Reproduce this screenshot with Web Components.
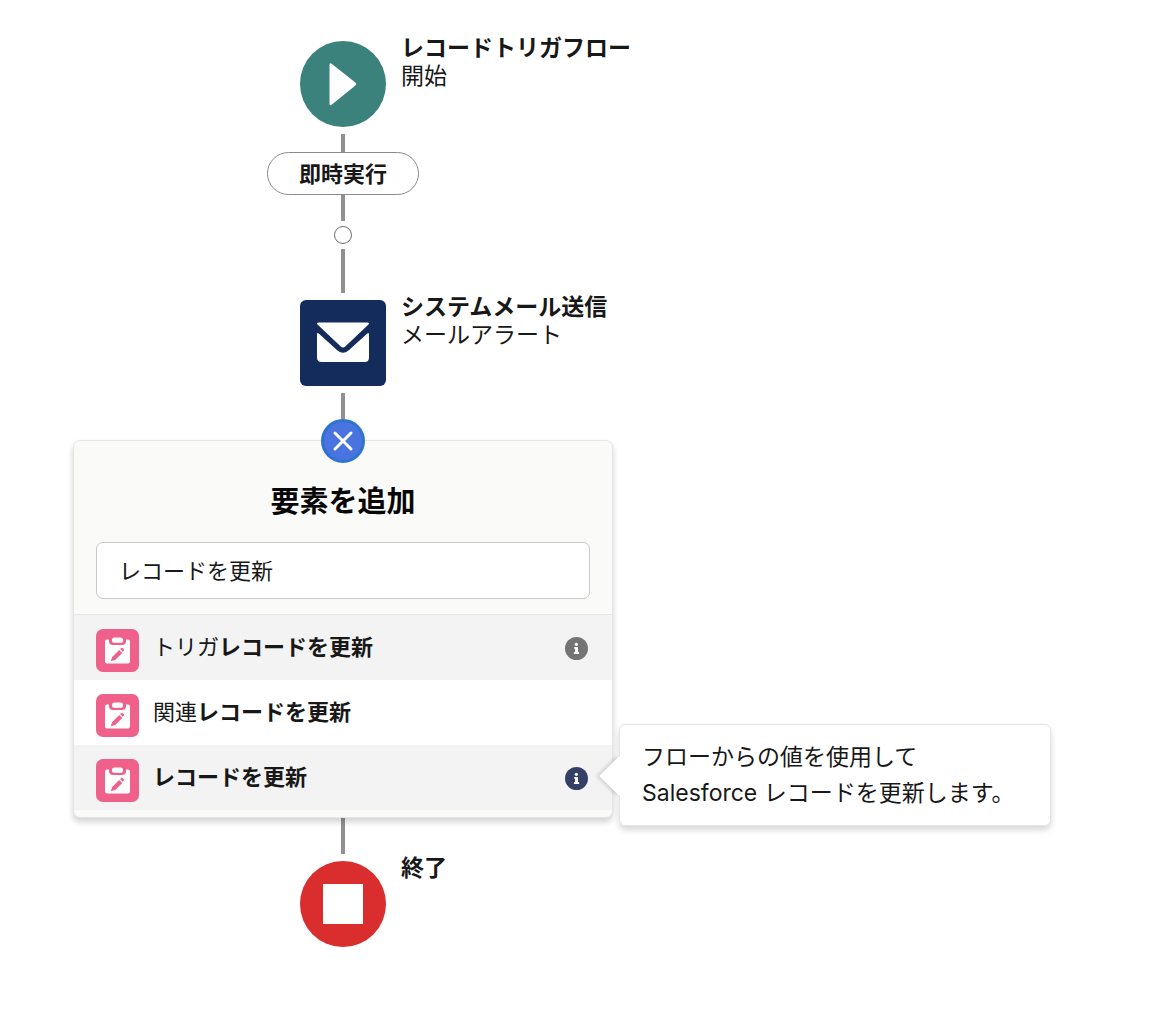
<!DOCTYPE html>
<html lang="ja">
<head>
<meta charset="utf-8">
<meta name="viewport" content="width=device-width, initial-scale=1">
<title>要素を追加</title>
<style>
  body {
    margin: 0;
    background: #fff;
    color: #181818;
    font-family: Inter, "Noto Sans CJK JP", sans-serif;
  }
</style>
</head>
<body>
<flow-canvas></flow-canvas>

<script>
class FlowConnector extends HTMLElement {
  constructor() {
    super();
    this.attachShadow({ mode: "open" }).innerHTML = `
      <style>
        :host {
          display: block;
          width: 4px;
          height: 26px;
          margin: 0 auto;
          background-color: #919191;
        }

        :host([size="small"]) {
          height: 18px;
        }

        :host([size="medium"]) {
          height: 36px;
        }

        :host([size="large"]) {
          height: 44px;
        }
      </style>
    `;
  }
}

class FlowNode extends HTMLElement {
  constructor() {
    super();
    this.attachShadow({ mode: "open" }).innerHTML = `
      <style>
        :host {
          display: grid;
          grid-template-columns: minmax(0, 1fr) auto minmax(0, 1fr);
          column-gap: 15px;
          line-height: 28px;
          font-size: 23px;
        }

        .icon {
          grid-column: 2;
          display: block;
          width: 86px;
          height: 86px;
          margin: 7px 0;
          border: 0;
          border-radius: 6px;
          padding: 0;
          background-color: #132c5c;
          cursor: pointer;
        }

        :host([kind="start"]) .icon {
          border-radius: 50%;
          background-color: #3a827b;
        }

        :host([kind="end"]) .icon {
          border-radius: 50%;
          background-color: #da2d2e;
        }

        .label {
          white-space: nowrap;
        }

        ::slotted(*) {
          display: block;
        }
      </style>
      <button class="icon" type="button" aria-labelledby="label"><slot name="icon"></slot></button>
      <div class="label" id="label"><slot></slot></div>
    `;
  }
}

class FlowPath extends HTMLElement {
  constructor() {
    super();
    this.attachShadow({ mode: "open" }).innerHTML = `
      <style>
        :host {
          display: flex;
          align-items: center;
          justify-content: center;
          box-sizing: border-box;
          height: 43px;
          margin: 0 auto;
          border: 1px solid #8c8c8c;
          border-radius: 22px;
          padding: 0 31px;
          background-color: #fff;
          font-size: 22px;
          font-weight: bold;
          line-height: 28px;
        }
      </style>
      <slot></slot>
    `;
  }
}

class FlowMerge extends HTMLElement {
  constructor() {
    super();
    this.attachShadow({ mode: "open" }).innerHTML = `
      <style>
        :host {
          display: block;
          padding: 5px 0;
        }

        button {
          display: block;
          box-sizing: border-box;
          width: 18px;
          height: 18px;
          margin: 0 auto;
          border: 1px solid #706e6b;
          border-radius: 50%;
          padding: 0;
          background-color: #fff;
          cursor: pointer;
        }
      </style>
      <button type="button" aria-label="+"></button>
    `;
  }
}

class InfoTip extends HTMLElement {
  constructor() {
    super();
    this.attachShadow({ mode: "open" }).innerHTML = `
      <style>
        :host {
          display: block;
          position: relative;
          width: 23px;
          height: 23px;
        }

        button {
          display: block;
          width: 100%;
          height: 100%;
          border: 0;
          padding: 0;
          background: none;
          color: #747474;
          cursor: pointer;
        }

        :host([open]) button {
          color: #354066;
        }

        svg {
          display: block;
        }

        .bubble {
          display: none;
          position: absolute;
          z-index: 2;
          top: -43px;
          left: calc(100% + 31px);
          box-sizing: border-box;
          width: 432px;
          border: 1px solid #e5e5e5;
          border-radius: 6px;
          padding: 14px 22px;
          background-color: #fff;
          box-shadow: 0 4px 6px rgba(0, 0, 0, 0.16);
          font-size: 23px;
          line-height: 36px;
        }

        :host([open]) .bubble {
          display: block;
        }

        .bubble::before {
          content: "";
          position: absolute;
          top: 37px;
          left: -15px;
          width: 28px;
          height: 28px;
          background-color: #fff;
          box-shadow: -2px 2px 4px rgba(0, 0, 0, 0.14);
          transform: rotate(45deg);
          clip-path: polygon(-8px -8px, 0 0, 28px 0, 28px 28px, 36px 36px, -8px 36px);
        }

        .text {
          position: relative;
        }
      </style>
      <button type="button" aria-label="i">
        <svg width="23" height="23" viewBox="0 0 23 23" aria-hidden="true">
          <circle cx="11.5" cy="11.5" r="11.5" fill="currentColor"/>
          <circle cx="11.4" cy="7.3" r="1.6" fill="#fff"/>
          <path d="M9.2 9.900h3.800v5.100h1.100v1.900H8.900v-1.900h1.200v-3.200h-.9z" fill="#fff"/>
        </svg>
      </button>
      <div class="bubble" role="tooltip"><div class="text"><slot></slot></div></div>
    `;
  }
}

class ElementOption extends HTMLElement {
  constructor() {
    super();
    this.attachShadow({ mode: "open" }).innerHTML = `
      <style>
        :host {
          display: flex;
          align-items: flex-start;
          gap: 14px;
          padding: 14px 24px 8px 22px;
        }

        :host([active]) {
          background-color: #f3f3f3;
        }

        svg {
          flex: none;
          display: block;
        }

        button {
          flex: 1;
          border: 0;
          padding: 0;
          background: none;
          color: inherit;
          font: inherit;
          font-size: 22px;
          line-height: 36px;
          text-align: start;
          cursor: pointer;
        }

        ::slotted(info-tip) {
          margin-top: 8px;
        }
      </style>
      <svg width="43" height="43" viewBox="0 0 43 43" aria-hidden="true">
        <rect width="43" height="43" rx="7" fill="#ef608b"/>
        <path d="M11 10.500h2v1.500q0 4 4 4h9q4 0 4-4v-1.500h2q2 0 2 2V32.500q0 2-2 2H11q-2 0-2-2V12.500q0-2 2-2z" fill="#fff"/>
        <path d="M18.500 8.500h6q2.500 0 2.500 2.500v1q0 1.700-1.700 1.700h-7.600q-1.700 0-1.700-1.700v-1q0-2.500 2.500-2.500z" fill="#fff"/>
        <path d="M16.200 27.900l7-7 3 3-7 7-3.600 1.200q-.800.200-.6-.6zM24.100 20l1.200-1.100q.6-.5 1.200 0l1.400 1.400q.5.600 0 1.200l-1.100 1.200z" fill="#ef608b"/>
      </svg>
      <button type="button"><slot></slot></button>
      <slot name="info"></slot>
    `;
  }
}

class AddElementPanel extends HTMLElement {
  constructor() {
    super();
    this.attachShadow({ mode: "open" }).innerHTML = `
      <style>
        :host {
          display: block;
          position: relative;
        }

        .close {
          display: flex;
          align-items: center;
          justify-content: center;
          position: relative;
          z-index: 1;
          box-sizing: border-box;
          width: 44px;
          height: 44px;
          margin: 0 auto -23px;
          border: 3px solid #2d74cf;
          border-radius: 50%;
          padding: 0;
          background-color: #4973de;
          cursor: pointer;
        }

        .panel {
          border: 1px solid #e5e5e5;
          border-radius: 7px;
          padding-bottom: 7px;
          background-color: #fafaf9;
          box-shadow: 0 4px 6px rgba(0, 0, 0, 0.18);
        }

        header {
          border-bottom: 1px solid #e5e5e5;
          padding: 41px 22px 15px;
        }

        h2 {
          margin: 0 0 20px;
          color: #080707;
          font-size: 29px;
          line-height: 40px;
          text-align: center;
        }

        input {
          display: block;
          box-sizing: border-box;
          width: 100%;
          height: 57px;
          border: 1px solid #c9c9c9;
          border-radius: 7px;
          padding: 0 22px 4px;
          background-color: #fff;
          color: inherit;
          font: inherit;
          font-size: 22px;
          line-height: 36px;
          outline: 0;
        }

        .list {
          background-color: #fff;
        }
      </style>
      <button class="close" type="button" aria-label="×">
        <svg width="22" height="22" viewBox="0 0 22 22" aria-hidden="true">
          <path d="M3 3l16 16M19 3L3 19" stroke="#fff" stroke-width="3" stroke-linecap="round"/>
        </svg>
      </button>
      <section class="panel">
        <header>
          <h2 id="title">要素を追加</h2>
          <input type="text" aria-labelledby="title" value="レコードを更新">
        </header>
        <div class="list"><slot></slot></div>
      </section>
    `;
  }
}

class FlowCanvas extends HTMLElement {
  constructor() {
    super();
    this.attachShadow({ mode: "open" }).innerHTML = `
      <style>
        :host {
          display: block;
          padding: 34px 73px;
        }

        main {
          display: flex;
          flex-direction: column;
          max-width: 540px;
        }
      </style>
      <main>
        <flow-node kind="start">
          <svg slot="icon" width="86" height="86" viewBox="0 0 86 86" aria-hidden="true">
            <path d="M29.500 24.200q0-3 2.400-1.200L55.400 41.600q1.800 1.400 0 2.800L31.900 63.600q-2.400 1.800-2.400-1.200z" fill="#fff"/>
          </svg>
          <strong>レコードトリガフロー</strong>
          <span>開始</span>
        </flow-node>
        <flow-connector size="small"></flow-connector>
        <flow-path>即時実行</flow-path>
        <flow-connector></flow-connector>
        <flow-merge></flow-merge>
        <flow-connector size="large"></flow-connector>
        <flow-node kind="action">
          <svg slot="icon" width="86" height="86" viewBox="0 0 86 86" aria-hidden="true">
            <path d="M19 22.500h48q3 0 1.500 2L45.500 46.200q-2.500 2.400-5 0L17.500 24.500q-1.500-2 1.500-2z" fill="#fff"/>
            <path d="M17 34.500q0-2.500 2-.8L37.500 50.500q5.500 4.600 11 0L67 33.700q2-1.700 2 .8V57.500q0 4.500-4.500 4.500h-43q-4.500 0-4.500-4.500z" fill="#fff"/>
          </svg>
          <strong>システムメール送信</strong>
          <span>メールアラート</span>
        </flow-node>
        <flow-connector></flow-connector>
        <add-element-panel>
          <element-option active>トリガ<b>レコードを更新</b><info-tip slot="info"></info-tip></element-option>
          <element-option>関連<b>レコードを更新</b></element-option>
          <element-option active>
            <b>レコードを更新</b>
            <info-tip slot="info" open>フローからの値を使用してSalesforce レコードを更新します。</info-tip>
          </element-option>
        </add-element-panel>
        <flow-connector size="medium"></flow-connector>
        <flow-node kind="end">
          <svg slot="icon" width="86" height="86" viewBox="0 0 86 86" aria-hidden="true">
            <path d="M23 23h40v40H23z" fill="#fff"/>
          </svg>
          <strong>終了</strong>
        </flow-node>
      </main>
    `;
  }
}

customElements.define("flow-connector", FlowConnector);
customElements.define("flow-node", FlowNode);
customElements.define("flow-path", FlowPath);
customElements.define("flow-merge", FlowMerge);
customElements.define("info-tip", InfoTip);
customElements.define("element-option", ElementOption);
customElements.define("add-element-panel", AddElementPanel);
customElements.define("flow-canvas", FlowCanvas);
</script>
</body>
</html>
